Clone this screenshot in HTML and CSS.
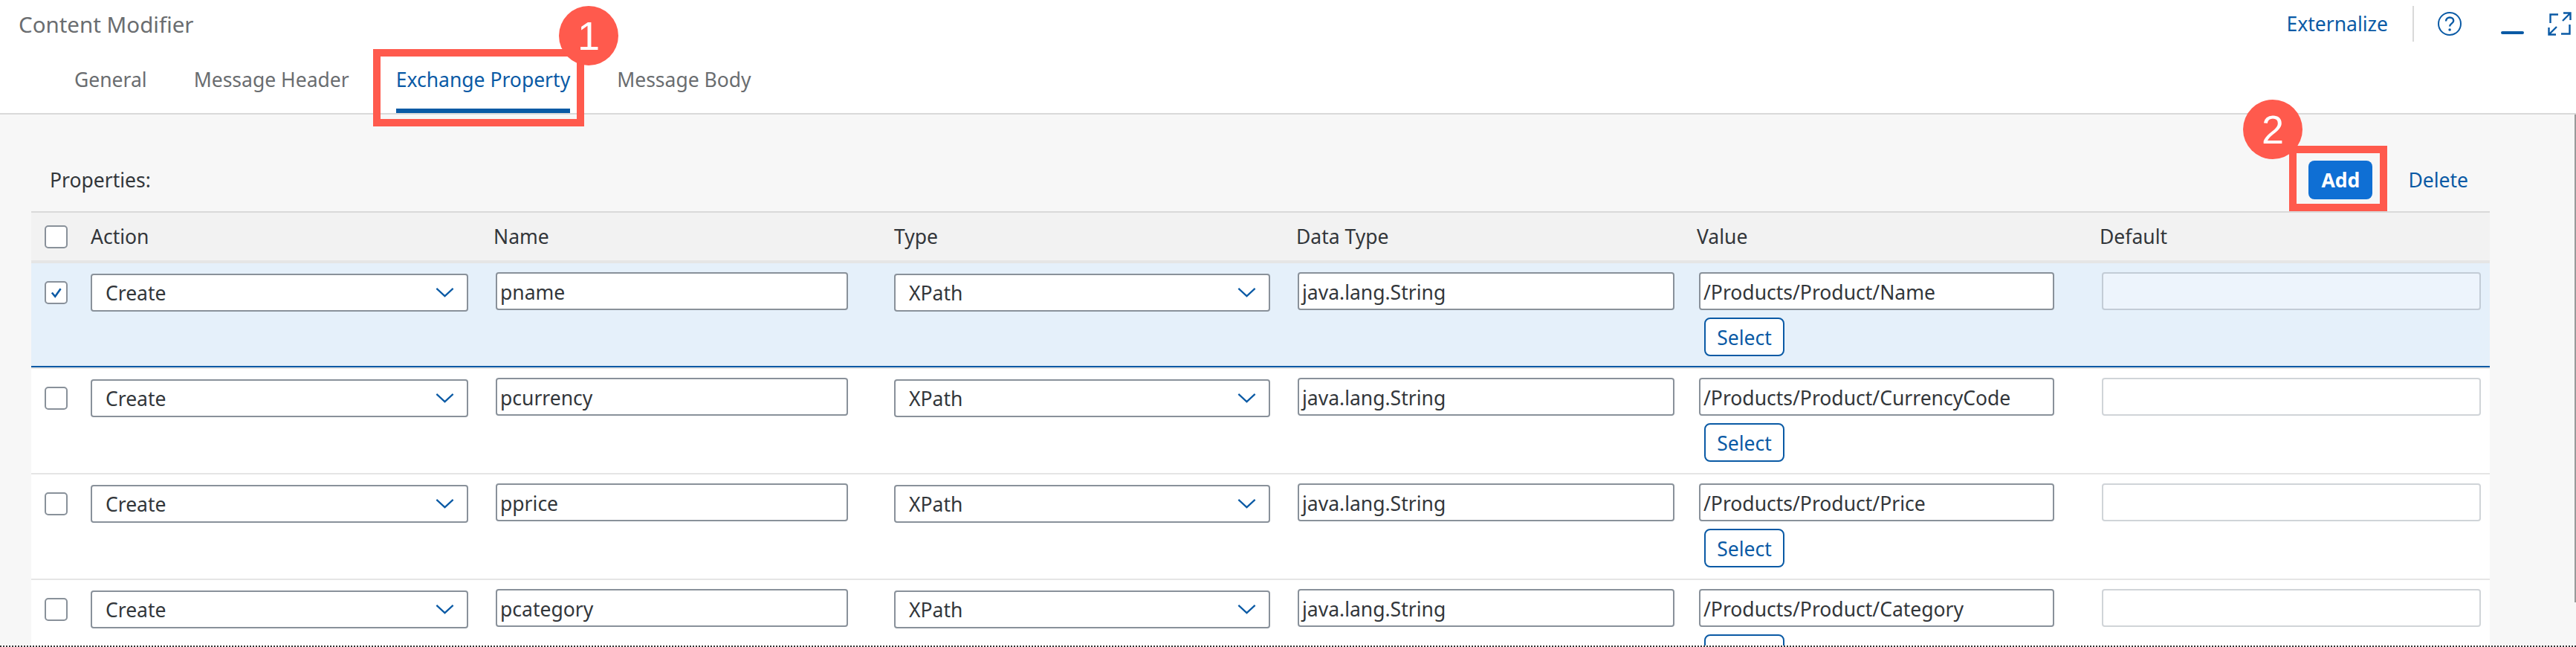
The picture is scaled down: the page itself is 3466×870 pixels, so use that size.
FILE: index.html
```html
<!DOCTYPE html>
<html lang="en">
<head>
  <meta charset="UTF-8">
  <title>Content Modifier</title>
  <link rel="stylesheet" href="styles.css">
</head>
<body>
  <div class="page">
    <header class="top">
      <div class="title-row">
        <span class="title">Content Modifier</span>
        <div class="actions">
          <a class="link externalize">Externalize</a>
          <span class="divider"></span>
          <svg class="icon help" viewBox="0 0 32 32" fill="none" stroke="#0a5aa5" stroke-width="2">
            <circle cx="16" cy="16" r="15"/>
            <path d="M11 12.500c0-3 2.300-5 5.200-5 2.800 0 5 1.800 5 4.500 0 3.600-5.100 3.700-5.100 7.500" stroke-width="2.400"/>
            <circle cx="16.100" cy="24" r="1.800" fill="#0a5aa5" stroke="none"/>
          </svg>
          <span class="minimize"></span>
          <svg class="icon expand" viewBox="0 0 32 32" fill="none" stroke="#0a5aa5" stroke-width="2.400">
            <path d="M14 3.500H3.500V15"/>
            <path d="M18 29.500h11.500V17"/>
            <path d="M21 1.500h9.500V11M30.500 1.500L20 12"/>
            <path d="M1.500 21v9.500H11M1.500 30.500L12 20"/>
          </svg>
        </div>
      </div>
      <nav class="tabs">
        <a class="tab">General</a>
        <a class="tab">Message Header</a>
        <a class="tab active">Exchange Property</a>
        <a class="tab">Message Body</a>
      </nav>
    </header>

    <main class="content">
      <div class="toolbar">
        <span class="props-label">Properties:</span>
        <button class="btn-add">Add</button>
        <a class="link delete">Delete</a>
      </div>

      <div class="table">
        <div class="row head">
          <div class="cell-check"><span class="checkbox"></span></div>
          <div>Action</div>
          <div>Name</div>
          <div>Type</div>
          <div>Data Type</div>
          <div>Value</div>
          <div>Default</div>
        </div>

        <div class="row selected">
          <div class="cell-check">
            <span class="checkbox">
              <svg viewBox="0 0 31 31" fill="none" stroke="#0a5aa5" stroke-width="3"><path d="M9 15.500l5 6 8.500-12"/></svg>
            </span>
          </div>
          <div class="cell"><div class="select select-action">Create<svg viewBox="0 0 26 14" fill="none" stroke="#0a5aa5" stroke-width="2.400"><path d="M1 1l12 11L25 1"/></svg></div></div>
          <div class="cell"><div class="input input-name">pname</div></div>
          <div class="cell"><div class="select select-type">XPath<svg viewBox="0 0 26 14" fill="none" stroke="#0a5aa5" stroke-width="2.400"><path d="M1 1l12 11L25 1"/></svg></div></div>
          <div class="cell"><div class="input input-datatype">java.lang.String</div></div>
          <div class="cell">
            <div class="input input-value">/Products/Product/Name</div>
            <button class="btn-select">Select</button>
          </div>
          <div class="cell"><div class="input input-default"></div></div>
        </div>

        <div class="row">
          <div class="cell-check"><span class="checkbox"></span></div>
          <div class="cell"><div class="select select-action">Create<svg viewBox="0 0 26 14" fill="none" stroke="#0a5aa5" stroke-width="2.400"><path d="M1 1l12 11L25 1"/></svg></div></div>
          <div class="cell"><div class="input input-name">pcurrency</div></div>
          <div class="cell"><div class="select select-type">XPath<svg viewBox="0 0 26 14" fill="none" stroke="#0a5aa5" stroke-width="2.400"><path d="M1 1l12 11L25 1"/></svg></div></div>
          <div class="cell"><div class="input input-datatype">java.lang.String</div></div>
          <div class="cell">
            <div class="input input-value">/Products/Product/CurrencyCode</div>
            <button class="btn-select">Select</button>
          </div>
          <div class="cell"><div class="input input-default"></div></div>
        </div>

        <div class="row">
          <div class="cell-check"><span class="checkbox"></span></div>
          <div class="cell"><div class="select select-action">Create<svg viewBox="0 0 26 14" fill="none" stroke="#0a5aa5" stroke-width="2.400"><path d="M1 1l12 11L25 1"/></svg></div></div>
          <div class="cell"><div class="input input-name">pprice</div></div>
          <div class="cell"><div class="select select-type">XPath<svg viewBox="0 0 26 14" fill="none" stroke="#0a5aa5" stroke-width="2.400"><path d="M1 1l12 11L25 1"/></svg></div></div>
          <div class="cell"><div class="input input-datatype">java.lang.String</div></div>
          <div class="cell">
            <div class="input input-value">/Products/Product/Price</div>
            <button class="btn-select">Select</button>
          </div>
          <div class="cell"><div class="input input-default"></div></div>
        </div>

        <div class="row">
          <div class="cell-check"><span class="checkbox"></span></div>
          <div class="cell"><div class="select select-action">Create<svg viewBox="0 0 26 14" fill="none" stroke="#0a5aa5" stroke-width="2.400"><path d="M1 1l12 11L25 1"/></svg></div></div>
          <div class="cell"><div class="input input-name">pcategory</div></div>
          <div class="cell"><div class="select select-type">XPath<svg viewBox="0 0 26 14" fill="none" stroke="#0a5aa5" stroke-width="2.400"><path d="M1 1l12 11L25 1"/></svg></div></div>
          <div class="cell"><div class="input input-datatype">java.lang.String</div></div>
          <div class="cell">
            <div class="input input-value">/Products/Product/Category</div>
            <button class="btn-select">Select</button>
          </div>
          <div class="cell"><div class="input input-default"></div></div>
        </div>
      </div>
    </main>

    <!-- callouts drawn over the screenshot -->
    <div class="mark mark-tab"></div>
    <div class="badge badge-tab">1</div>
    <div class="mark mark-add"></div>
    <div class="badge badge-add">2</div>
    <div class="scroll-thumb"></div>
    <div class="dots"></div>
  </div>
</body>
</html>
```

FILE: styles.css
```css
* {
  box-sizing: border-box;
}

body {
  margin: 0;
  font-family: "Noto Sans", "Liberation Sans", sans-serif;
  background: #fff;
  color: #32363a;
}

.page {
  position: relative;
  width: 3466px;
  height: 870px;
  overflow: hidden;
}

/* header */
.top {
  height: 154px;
  background: #fff;
  border-bottom: 2px solid #d9d9d9;
}

.title-row {
  display: flex;
  justify-content: space-between;
  height: 64px;
  padding: 0 6px 0 25px;
  align-items: center;
}

.title {
  font-size: 29.5px;
  color: #6a6d70;
}

.actions {
  display: flex;
  align-items: center;
}

.link {
  color: #0a5aa5;
  font-size: 26.5px;
}

.externalize {
  margin-right: 33px;
}

.divider {
  width: 2px;
  height: 48px;
  background: #d9d9d9;
  margin-right: 32px;
}

.icon {
  display: block;
  width: 32px;
  height: 32px;
}

.minimize {
  width: 31px;
  height: 4px;
  border-radius: 2px;
  background: #0a5aa5;
  margin: 24px 32px 0 53px;
}

.tabs {
  display: flex;
  height: 88px;
  padding-left: 100px;
  gap: 63px;
}

.tab {
  height: 88px;
  padding-top: 25px;
  font-size: 26.5px;
  color: #6a6d70;
}

.tab.active {
  color: #0a5aa5;
  border-bottom: 6px solid #0a5aa5;
}

/* content */
.content {
  height: 716px;
  background: #f7f7f7;
  padding: 0 116px 0 42px;
}

.toolbar {
  display: flex;
  align-items: center;
  height: 130px;
  padding: 46px 0 0 25px;
}

.props-label {
  font-size: 26.5px;
  margin-right: auto;
}

.btn-add {
  width: 86px;
  height: 52px;
  margin-right: 48px;
  border: 0;
  border-radius: 8px;
  background: #0f6fd4;
  color: #fff;
  font-family: inherit;
  font-size: 26.5px;
  font-weight: 700;
}

.delete {
  margin-right: 29px;
}

.table {
  border-top: 2px solid #d9d9d9;
}

.row {
  display: grid;
  grid-template-columns: 80px 542px 539px 541px 539px 542px 525px;
  height: 142px;
  background: #fff;
  border-bottom: 2px solid #e5e5e5;
  font-size: 26.5px;
}

.row.head {
  height: 68px;
  background: #f2f2f2;
  align-items: center;
  padding-top: 1px;
  padding-bottom: 1px;
  border-bottom: 4px solid #e5e5e5;
}

.row.selected {
  background: #e5f0fa;
  box-shadow: inset 0 -2px 0 #0a5aa5;
}

.cell-check {
  padding: 24px 0 0 18px;
}

.head .cell-check {
  padding-top: 0;
}

.checkbox {
  display: block;
  width: 31px;
  height: 31px;
  background: #fff;
  border: 2px solid #89919a;
  border-radius: 5px;
}

.checkbox svg {
  display: block;
  width: 27px;
  height: 27px;
}

.cell {
  padding-top: 12px;
}

.select,
.input {
  height: 51px;
  background: #fff;
  border: 2px solid #89919a;
  border-radius: 4px;
  white-space: nowrap;
  display: flex;
  align-items: center;
}

.select {
  justify-content: space-between;
  margin-top: 2px;
  padding: 0 17px 0 18px;
}

.select svg {
  display: block;
  width: 25px;
  height: 13px;
}

.input {
  padding: 2px 0 0 4px;
}

.select-action {
  width: 508px;
}

.select-type {
  width: 506px;
}

.input-name {
  width: 474px;
  margin-left: 3px;
}

.input-datatype {
  width: 507px;
  margin-left: 2px;
}

.input-value {
  width: 478px;
  margin-left: 3px;
}

.input-default {
  width: 510px;
  margin-left: 3px;
  border-color: #d0d4d8;
}

.selected .input-default {
  background: #edf4fc;
  border-color: #c3ccd6;
}

.btn-select {
  display: block;
  width: 108px;
  height: 52px;
  margin: 10px 0 0 10px;
  padding: 2px 0 0;
  background: #fff;
  border: 2px solid #0a5aa5;
  border-radius: 8px;
  color: #0a5aa5;
  font-family: inherit;
  font-size: 26.5px;
}

/* overlays */
.mark {
  position: absolute;
  border: 10px solid #ff5a4d;
}

.mark-tab {
  left: 502px;
  top: 66px;
  width: 284px;
  height: 104px;
}

.mark-add {
  left: 3080px;
  top: 196px;
  width: 132px;
  height: 88px;
}

.badge {
  position: absolute;
  width: 80px;
  height: 80px;
  border-radius: 50%;
  background: #ff5a4d;
  color: #fff;
  font-family: "Liberation Sans", sans-serif;
  font-size: 54px;
  line-height: 80px;
  text-align: center;
}

.badge-tab {
  left: 752px;
  top: 8px;
}

.badge-add {
  left: 3018px;
  top: 134px;
}

.scroll-thumb {
  position: absolute;
  left: 3464px;
  top: 154px;
  width: 2px;
  height: 656px;
  background: #999;
}

.dots {
  position: absolute;
  left: 0;
  bottom: 0;
  width: 100%;
  height: 2px;
  background: repeating-linear-gradient(90deg, #333 0 2px, #fff 2px 4px);
}
```
